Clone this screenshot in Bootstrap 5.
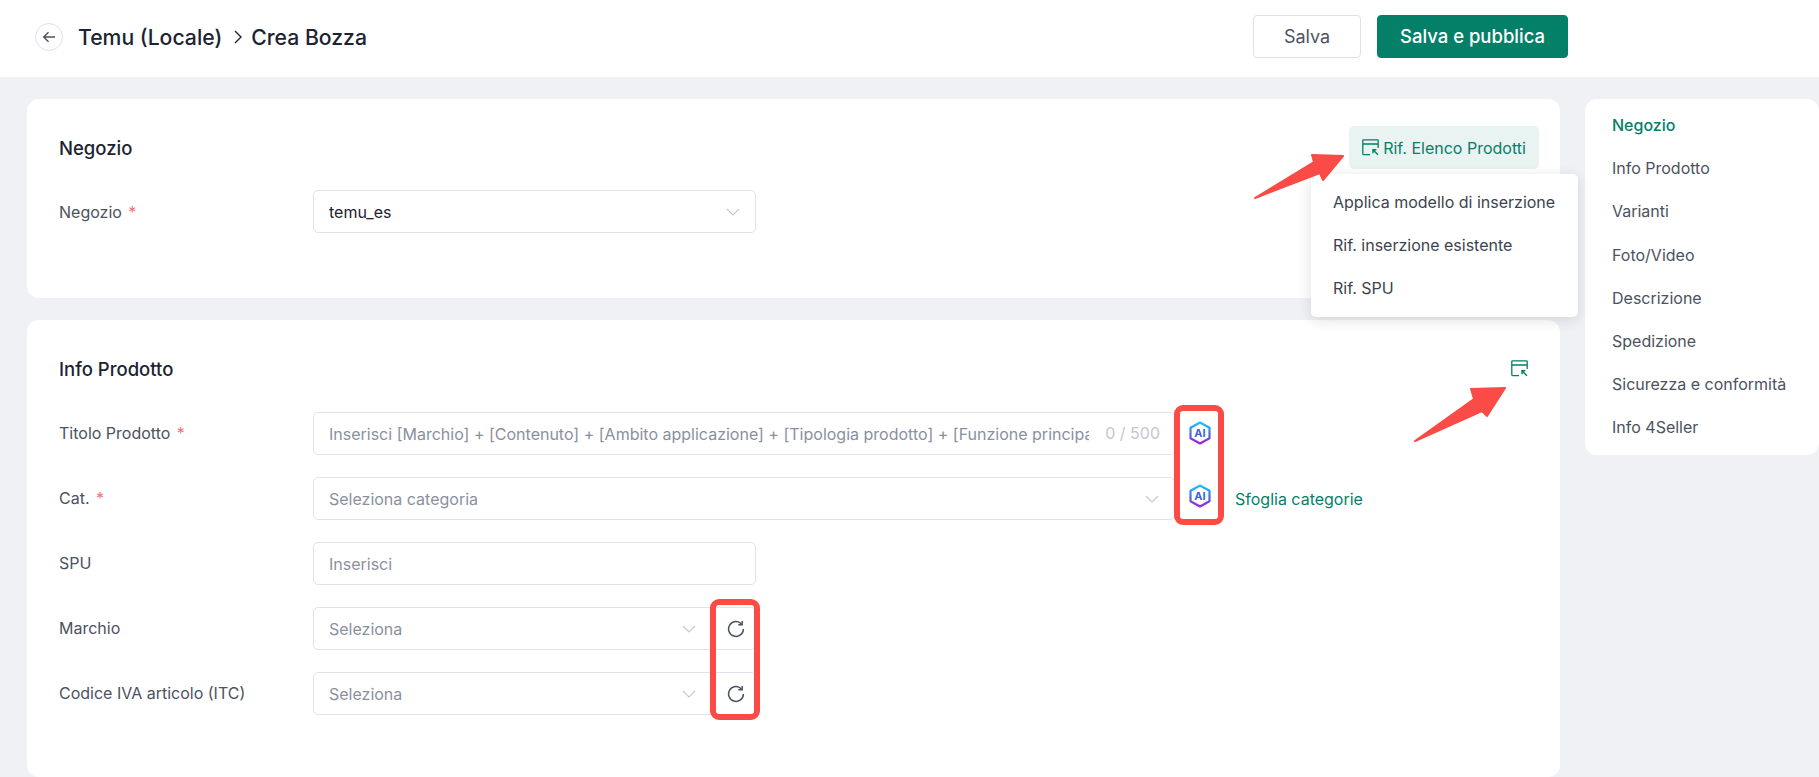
<!DOCTYPE html>
<html lang="it">
<head>
<meta charset="utf-8">
<title>Crea Bozza</title>
<link href="https://cdn.jsdelivr.net/npm/bootstrap@5.3.0/dist/css/bootstrap.min.css" rel="stylesheet">
<style>
html,body{height:777px;overflow:hidden}
body{background:#f0f1f5;font-family:Inter,"Liberation Sans",sans-serif;font-size:16px;color:#1d2330;position:relative}
.top-bar{height:77px;background:#fff;padding:0 251px 4px 35px}
.back-btn{width:28px;height:28px;border:1px solid #dfe1e8;border-radius:50%;background:#fff;padding:0;margin-right:15px}
.page-title{font-size:21.2px;font-weight:500;color:#1d2330;margin:0;line-height:28px}
.crumb-sep{margin:0 8px 0 12px}
.btn-save,.btn-publish{height:43px;font-size:18px;border-radius:4px;padding:0}
.btn-save{width:108px;background:#fff;border:1px solid #dfe1e8;color:#4b5563}
.btn-publish{width:191px;background:#047f68;border:1px solid #047f68;color:#fff;font-weight:500;font-size:18.5px;margin-left:16px}
.workspace{padding:22px 0 0 27px}
.form-column{width:1533px;flex:none}
.panel{background:#fff;border-radius:12px;padding:0 32px;position:relative}
.panel-shop{height:199px;margin-bottom:22px}
.panel-product{height:457px}
.panel-head{height:91px;padding-top:8px}
.panel-product .panel-head{height:92px;padding-top:7px}
.panel-name{font-size:18.5px;font-weight:500;margin:0;color:#1d2330}
.btn-ref{position:absolute;top:27px;right:21px;width:190px;height:43px;background:#e9f3f1;color:#047f68;border:0;border-radius:5px;font-size:16px;padding:0}
.ref-menu{position:absolute;top:75px;left:1284px;width:267px;height:143px;margin:0;padding:7px 0 0;border:0;border-radius:5px;box-shadow:0 3px 14px rgba(30,40,60,.14);display:block;background:#fff;z-index:5}
.ref-menu .dropdown-item{height:43px;line-height:43px;padding:0 0 0 22px;font-size:16px;color:#3c4350}
.icon-ref{position:absolute;top:40px;right:32px}
.field-row{height:43px;margin-bottom:22px}
.field-label{width:254px;flex:none;color:#4b5260;font-size:16px;line-height:20px;margin:0}
.panel-product .field-label{margin-top:-2px}
.req{color:#f76e7c;margin-left:2px}
.form-control,.form-select{height:43px;font-size:16px;border:1.5px solid #e0e2e9;color:#1d2330;border-radius:5px;padding:0 15px;box-shadow:none}
.form-control::placeholder{color:#8a90a0;opacity:1}
.form-select{background-image:url("data:image/svg+xml,%3Csvg xmlns='http://www.w3.org/2000/svg' viewBox='0 0 14 8'%3E%3Cpath d='M1 1l6 6 6-6' fill='none' stroke='%23c4c8d2' stroke-width='1.1'/%3E%3C/svg%3E");background-position:right 15px center;background-size:14px 8px}
.form-select.is-empty{color:#8a90a0}
.w-short{width:443px;flex:none}
.w-long{width:862px;flex:none}
.w-refresh{width:443px;flex:none}
.w-refresh .form-select{flex:1 1 auto;width:auto;border-radius:5px 0 0 5px}
.refresh-cell{width:44px;flex:none;height:43px;background:#fff;border:1.5px solid #e0e2e9;border-left:0;border-radius:0 5px 5px 0}
.refresh-cell svg{margin-left:4px}
.long-input{padding-right:85px}
.count-text{position:absolute;top:0;right:15px;line-height:43px;height:43px;font-size:16px;color:#c3c7d1;z-index:2}
.ai-cell{width:50px;flex:none}
.ai-cell svg{margin-top:-1px}
.ai-cell.ai-raised svg{margin-top:-5px}
.link-browse{color:#047f68;text-decoration:none;font-size:16px;margin-left:10px}
.side-nav{flex:1 1 auto;margin-left:25px;height:356px;background:#fff;border-radius:12px;padding:5px 0 0 27px}
.side-nav a{display:block;height:43.2px;line-height:43px;font-size:16px;color:#4b5260;text-decoration:none;white-space:nowrap}
.side-nav a.active{color:#047f68;font-weight:500}
.annot{position:absolute;left:0;top:0;pointer-events:none;z-index:10}
</style>
</head>
<body>
<svg width="0" height="0" class="position-absolute">
  <defs>
    <linearGradient id="hexg" x1="0" y1="0" x2="0" y2="1">
      <stop offset="0" stop-color="#19c5ff"/><stop offset=".5" stop-color="#3f73f0"/><stop offset="1" stop-color="#a61fc9"/>
    </linearGradient>
    <symbol id="i-ref" viewBox="0 0 17 17">
      <path d="M8 15.6H1.6a.8.8 0 0 1-.8-.8V1.6A.8.8 0 0 1 1.6.8h13.8a.8.8 0 0 1 .8.8v7.4M.8 5h15.4" fill="none" stroke="#047f68" stroke-width="1.3"/>
      <path d="M16 15.8l-4.6-4.6M11 14.2v-3.4h3.4" fill="none" stroke="#047f68" stroke-width="1.4"/>
    </symbol>
    <symbol id="i-refresh" viewBox="0 0 18 18">
      <path d="M14.4 3.9A7.4 7.4 0 1 0 16.4 9" fill="none" stroke="#4a5260" stroke-width="1.5"/>
      <path d="M15.2 .9v3.9h-3.9" fill="none" stroke="#4a5260" stroke-width="1.5"/>
    </symbol>
  </defs>
</svg>

<header class="top-bar d-flex align-items-center">
  <button class="back-btn d-flex align-items-center justify-content-center" type="button" aria-label="Indietro">
    <svg width="14" height="12" viewBox="0 0 14 12"><path d="M13 6H2M6.5 1.2L1.7 6l4.8 4.8" fill="none" stroke="#4a5260" stroke-width="1.4"/></svg>
  </button>
  <h1 class="page-title d-flex align-items-center">Temu (Locale)
    <svg class="crumb-sep" width="9" height="14" viewBox="0 0 9 14"><path d="M1 1l6 6-6 6" fill="none" stroke="#1d2330" stroke-width="1.4"/></svg>
    Crea Bozza</h1>
  <div class="ms-auto d-flex">
    <button class="btn btn-save" type="button">Salva</button>
    <button class="btn btn-publish" type="button">Salva e pubblica</button>
  </div>
</header>

<main class="workspace d-flex align-items-start">
  <div class="form-column">
    <section class="panel panel-shop">
      <div class="panel-head d-flex align-items-center"><h2 class="panel-name">Negozio</h2></div>
      <button class="btn btn-ref d-flex align-items-center justify-content-center gap-1" type="button">
        <svg width="17" height="17"><use href="#i-ref"/></svg>Rif. Elenco Prodotti
      </button>
      <ul class="dropdown-menu ref-menu list-unstyled">
        <li><a class="dropdown-item" href="#">Applica modello di inserzione</a></li>
        <li><a class="dropdown-item" href="#">Rif. inserzione esistente</a></li>
        <li><a class="dropdown-item" href="#">Rif. SPU</a></li>
      </ul>
      <div class="field-row d-flex align-items-center">
        <label class="field-label">Negozio <span class="req">*</span></label>
        <select class="form-select w-short"><option>temu_es</option></select>
      </div>
    </section>

    <section class="panel panel-product">
      <div class="panel-head d-flex align-items-center"><h2 class="panel-name">Info Prodotto</h2></div>
      <svg class="icon-ref" width="17" height="17"><use href="#i-ref"/></svg>
      <div class="field-row d-flex align-items-center">
        <label class="field-label">Titolo Prodotto <span class="req">*</span></label>
        <div class="w-long position-relative">
          <input class="form-control long-input" type="text" placeholder="Inserisci [Marchio] + [Contenuto] + [Ambito applicazione] + [Tipologia prodotto] + [Funzione principale]">
          <span class="count-text">0 / 500</span>
        </div>
        <div class="ai-cell d-flex justify-content-center">
          <svg width="24" height="24" viewBox="0 0 24 24"><path d="M12 1.5l9.5 5.2v10.6L12 22.5 2.5 17.3V6.7z" fill="none" stroke="url(#hexg)" stroke-width="2.2" stroke-linejoin="round"/><text x="12" y="16" text-anchor="middle" font-family="Inter,sans-serif" font-size="11" font-weight="700" fill="#3d62e0">AI</text></svg>
        </div>
      </div>
      <div class="field-row d-flex align-items-center">
        <label class="field-label">Cat. <span class="req">*</span></label>
        <select class="form-select is-empty w-long"><option>Seleziona categoria</option></select>
        <div class="ai-cell ai-raised d-flex justify-content-center">
          <svg width="24" height="24" viewBox="0 0 24 24"><path d="M12 1.5l9.5 5.2v10.6L12 22.5 2.5 17.3V6.7z" fill="none" stroke="url(#hexg)" stroke-width="2.2" stroke-linejoin="round"/><text x="12" y="16" text-anchor="middle" font-family="Inter,sans-serif" font-size="11" font-weight="700" fill="#3d62e0">AI</text></svg>
        </div>
        <a class="link-browse" href="#">Sfoglia categorie</a>
      </div>
      <div class="field-row d-flex align-items-center">
        <label class="field-label">SPU</label>
        <input class="form-control w-short" type="text" placeholder="Inserisci">
      </div>
      <div class="field-row d-flex align-items-center">
        <label class="field-label">Marchio</label>
        <div class="w-refresh d-flex">
          <select class="form-select is-empty"><option>Seleziona</option></select>
          <div class="refresh-cell d-flex align-items-center justify-content-center"><svg width="18" height="18"><use href="#i-refresh"/></svg></div>
        </div>
      </div>
      <div class="field-row d-flex align-items-center">
        <label class="field-label">Codice IVA articolo (ITC)</label>
        <div class="w-refresh d-flex">
          <select class="form-select is-empty"><option>Seleziona</option></select>
          <div class="refresh-cell d-flex align-items-center justify-content-center"><svg width="18" height="18"><use href="#i-refresh"/></svg></div>
        </div>
      </div>
    </section>
  </div>

  <nav class="side-nav">
    <a class="active" href="#">Negozio</a>
    <a href="#">Info Prodotto</a>
    <a href="#">Varianti</a>
    <a href="#">Foto/Video</a>
    <a href="#">Descrizione</a>
    <a href="#">Spedizione</a>
    <a href="#">Sicurezza e conformità</a>
    <a href="#">Info 4Seller</a>
  </nav>
</main>

<svg class="annot" width="1819" height="777" viewBox="0 0 1819 777">
  <g fill="#fa4b46" stroke="#fa4b46" stroke-width="2" stroke-linejoin="round">
    <polygon points="1255,198 1314,162 1312,155 1343,156 1323,180 1320,173"/>
    <polygon points="1415,441 1474,399 1471,389 1505,388 1487,416 1482,411"/>
  </g>
  <rect x="1177" y="408" width="44" height="114" rx="6" fill="none" stroke="#fa4b46" stroke-width="6"/>
  <rect x="713" y="602" width="44" height="115" rx="6" fill="none" stroke="#fa4b46" stroke-width="6"/>
</svg>
<script src="https://cdn.jsdelivr.net/npm/bootstrap@5.3.0/dist/js/bootstrap.bundle.min.js"></script>
</body>
</html>
